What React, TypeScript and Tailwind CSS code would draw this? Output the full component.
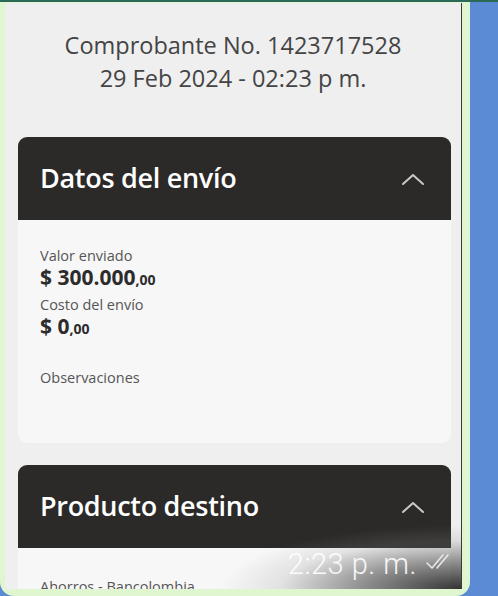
import React from 'react';

function Chevron() {
  return (
    <svg width="24" height="14" viewBox="0 0 24 14" fill="none" className="shrink-0">
      <polyline points="2,12 12,3 22,12" stroke="#c9c9c9" strokeWidth="2" strokeLinecap="round" strokeLinejoin="round" />
    </svg>
  );
}

function Amount({ whole }: { whole: string }) {
  return (
    <div className="text-[21px] font-bold text-[#2c2c2c] leading-[24px]">
      $ {whole}
      <span className="text-[14px]">,00</span>
    </div>
  );
}

function SectionHeader({ title }: { title: string }) {
  return (
    <div className="h-[83px] shrink-0 bg-[#2b2a29] rounded-t-[9px] flex items-center justify-between pl-[22px] pr-[26px]">
      <span className="text-[27px] font-semibold text-white tracking-[-0.3px]">{title}</span>
      <Chevron />
    </div>
  );
}

export default function App() {
  return (
    <div className="w-[498px] h-[596px] bg-[#5c8bd5] flex flex-col overflow-hidden" style={{ fontFamily: '"Open Sans", sans-serif' }}>
      <div className="h-[2px] bg-[#2a6a57] shrink-0" />
      <div className="w-[470px] flex-1 min-h-0 bg-[#e0f6d0] rounded-b-[14px] pt-[1px] pl-[5px] pr-[8px] pb-[7px] flex">
        <div className="relative flex-1 min-h-0 bg-[#efefef] border-r border-[#3a3a3a] overflow-hidden flex flex-col">
          <div className="pt-[26px] text-center text-[23.5px] leading-[33px] text-[#444] shrink-0">
            <div>Comprobante No. 1423717528</div>
            <div>29 Feb 2024 - 02:23 p m.</div>
          </div>

          <div className="mt-[42px] ml-[13px] mr-[10px] flex flex-col shrink-0">
            <SectionHeader title="Datos del envío" />
            <div className="h-[223px] bg-[#f7f7f7] rounded-b-[9px] pl-[22px] pt-[27px]">
              <div className="text-[14.5px] text-[#555] leading-[18px]">Valor enviado</div>
              <Amount whole="300.000" />
              <div className="text-[14.5px] text-[#555] leading-[18px] mt-[4px]">Costo del envío</div>
              <Amount whole="0" />
              <div className="text-[14.5px] text-[#555] leading-[18px] mt-[28px]">Observaciones</div>
            </div>
          </div>

          <div className="mt-[22px] ml-[13px] mr-[10px] flex flex-col shrink-0">
            <SectionHeader title="Producto destino" />
            <div className="h-[60px] bg-[#f7f7f7] pl-[22px] pt-[30px]">
              <div className="text-[14.5px] text-[#555] leading-[18px]">Ahorros - Bancolombia</div>
            </div>
          </div>

          <div className="absolute right-0 bottom-0 w-[240px] h-[64px] bg-[radial-gradient(100%_100%_at_100%_100%,rgba(30,30,30,0.9),rgba(70,70,70,0.6)_40%,rgba(140,140,140,0.2)_75%,transparent_100%)] flex items-end justify-end pr-[10px] pb-[10px] gap-[8px]">
            <span className="text-[29px] leading-[30px] text-white/90 tracking-[0.5px]" style={{ fontFamily: 'Roboto, sans-serif', fontWeight: 300 }}>
              2:23 p. m.
            </span>
            <svg width="26" height="18" viewBox="0 0 26 18" fill="none" className="mb-[8px]">
              <polyline points="2,10 7,15 18,2" stroke="#e8e8e8" strokeWidth="1.6" strokeLinecap="round" strokeLinejoin="round" />
              <polyline points="12,15 23,2" stroke="#e8e8e8" strokeWidth="1.6" strokeLinecap="round" />
            </svg>
          </div>
        </div>
      </div>
    </div>
  );
}
